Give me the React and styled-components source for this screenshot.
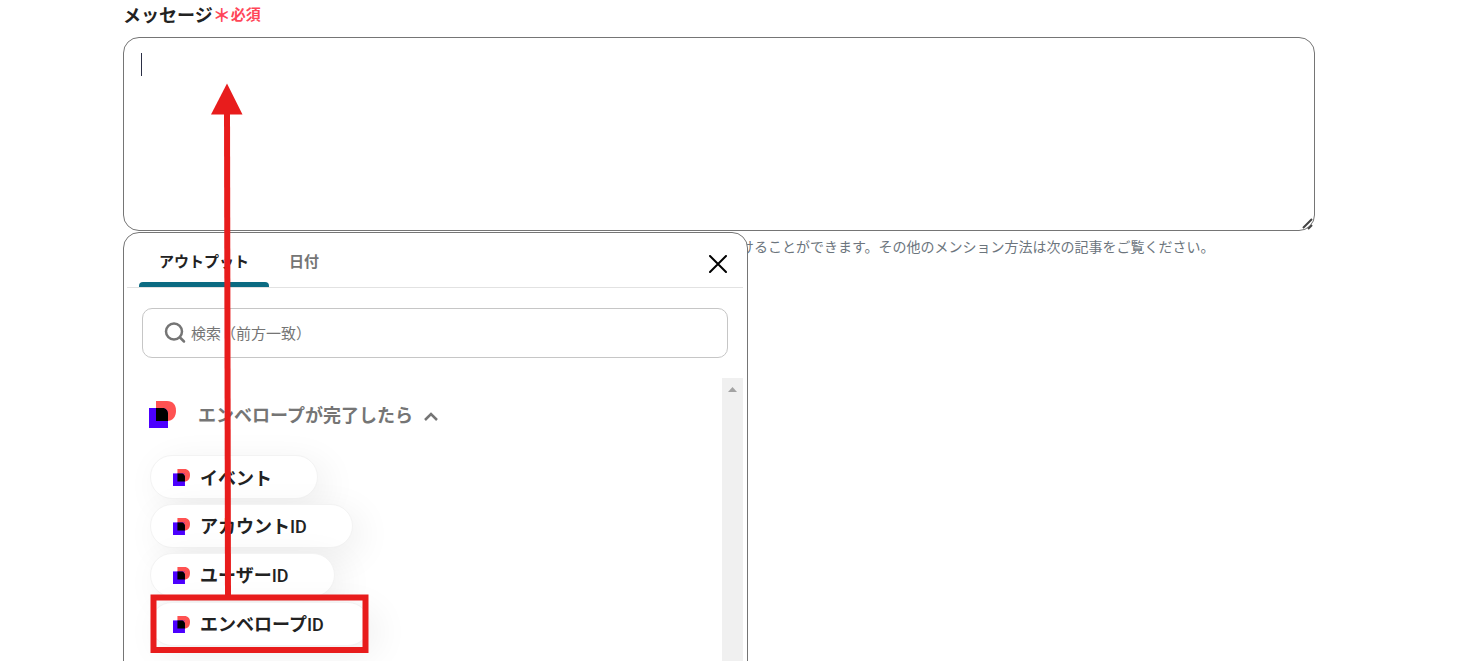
import React from "react";
import styled, { createGlobalStyle } from "styled-components";

const GlobalStyle = createGlobalStyle`
  * {
    box-sizing: border-box;
  }

  body {
    margin: 0;
    background: #fff;
    color: #222;
    font-family: "Noto Sans CJK JP", "Noto Sans", sans-serif;
    overflow: hidden;
  }

  button, input, textarea {
    font-family: inherit;
  }
`;

const Page = styled.main`
  height: 100vh;
  padding: 0 150px 0 123px;
  overflow: hidden;
`;

const Field = styled.div`
  position: relative;
`;

const LabelRow = styled.div`
  display: flex;
  align-items: center;
  height: 28px;
  margin-bottom: 9px;
`;

const Label = styled.label`
  font-size: 18px;
  font-weight: 700;
  line-height: 28px;
`;

const Required = styled.span`
  display: flex;
  color: #ff4658;
  font-size: 15px;
  font-weight: 700;
  line-height: 30px;
`;

const Star = styled.span`
  font-size: 18px;
`;

const Message = styled.textarea`
  display: block;
  width: 100%;
  height: 194px;
  padding: 14px 18px;
  border: 1px solid #757575;
  border-radius: 16px;
  background: #fff;
  font-size: 16px;
  outline: none;
  resize: none;
`;

// Text cursor at the start of the empty message
const Caret = styled.span`
  position: absolute;
  top: 53px;
  left: 18px;
  width: 1px;
  height: 23px;
  background: #2b2f45;
`;

const ResizeGrip = styled.svg`
  position: absolute;
  top: 218px;
  right: 1px;
  pointer-events: none;
`;

const Hint = styled.p`
  margin: 5px 0 0;
  padding-left: 617px;
  color: #6c757d;
  font-size: 14px;
  line-height: 20px;
  white-space: nowrap;
`;

const Picker = styled.section`
  position: absolute;
  top: 232px;
  left: 0;
  width: 625px;
  padding: 0 4px 0 3px;
  border: 1px solid #757575;
  border-radius: 16px;
  background: #fff;
`;

const PickerHeader = styled.div`
  display: flex;
  justify-content: space-between;
  height: 55px;
  padding: 0 11px 0 12px;
  border-bottom: 1px solid #e2e2e2;
`;

const Tabs = styled.div`
  display: flex;
`;

const Tab = styled.button`
  display: flex;
  flex-direction: column;
  justify-content: space-between;
  height: 54px;
  padding: 18px 0 0;
  border: 0;
  background: none;
  color: ${props => props.$active ? "#222" : "#757575"};
  font-size: 15px;
  font-weight: 700;
  line-height: 20px;

  span {
    padding: 0 20px;
  }

  &::after {
    content: "";
    align-self: stretch;
    height: 5px;
    border-radius: 4px 4px 0 0;
    background: ${props => props.$active ? "#0b6b82" : "none"};
  }
`;

const CloseButton = styled.button`
  display: flex;
  align-items: center;
  justify-content: center;
  align-self: center;
  width: 28px;
  height: 28px;
  margin-top: 7px;
  padding: 0;
  border: 0;
  background: none;
`;

const SearchBox = styled.label`
  display: flex;
  align-items: center;
  gap: 4px;
  height: 50px;
  margin: 20px 15px;
  padding: 0 20px;
  border: 1px solid #c6c6c6;
  border-radius: 10px;
`;

const SearchInput = styled.input`
  flex: 1;
  height: 24px;
  padding: 0 0 2px;
  border: 0;
  background: none;
  font-size: 15px;
  outline: none;

  &::placeholder {
    color: #757575;
    opacity: 1;
  }
`;

const ListArea = styled.div`
  display: flex;
  height: 360px;
  overflow: hidden;
`;

const List = styled.div`
  flex: 1;
  padding: 13px 22px 0;
  overflow: hidden;
`;

const ScrollTrack = styled.div`
  display: flex;
  justify-content: center;
  width: 21px;
  padding-top: 9px;
  background: #f0f0f0;
`;

const GroupButton = styled.button`
  display: flex;
  align-items: center;
  gap: 11px;
  height: 46px;
  padding: 0;
  border: 0;
  background: none;
  color: #757575;
  font-size: 18px;
  font-weight: 700;
  line-height: 26px;

  > svg {
    margin-top: 5px;
  }
`;

const GroupTitle = styled.span`
  display: flex;
  align-items: center;
  gap: 22px;
`;

const Chips = styled.div`
  display: flex;
  flex-direction: column;
  align-items: flex-start;
  gap: 5px;
  padding: 18px 0 0 1px;
`;

const Chip = styled.button`
  display: flex;
  align-items: center;
  gap: 10px;
  height: 44px;
  padding: 0 45px 0 22px;
  border: 1px solid #f3f3f3;
  border-radius: 22px;
  background: #fff;
  box-shadow: 8px 8px 36px rgba(0, 0, 0, 0.07);
  color: #222;
  font-size: 18px;
  font-weight: 700;
  line-height: 26px;
`;

const Latin = styled.span`
  font-family: Roboto, sans-serif;
  font-weight: 500;
`;

// Red guide drawn over the form, from the chip up to the message box
const Guide = styled.svg`
  position: absolute;
  top: 83px;
  left: 27px;
  pointer-events: none;
`;

function Logo({ size }) {
  return (
    <svg width={size} height={size} viewBox="0 0 27 27" aria-hidden="true">
      <path d="M7 0h11c6 0 9 4 9 9.500C27 15.500 24 20 18 20H7z" fill="#ff5252" />
      <path d="M0 7h19v20H0z" fill="#4c00ff" />
      <path d="M7 7h8c2.500 1 4 2.500 4 5v8H7z" fill="#000" />
      <path d="M15 7h4v5c0-2.500-1.500-4-4-5z" fill="#ff5252" />
    </svg>
  );
}

const chips = [
  { name: "イベント" },
  { name: "アカウント", suffix: "ID" },
  { name: "ユーザー", suffix: "ID" },
  { name: "エンベロープ", suffix: "ID" },
];

export default function App() {
  return (
    <Page>
      <GlobalStyle />
      <Field>
        <LabelRow>
          <Label htmlFor="message">メッセージ</Label>
          <Required>
            <Star>＊</Star>
            <span>必須</span>
          </Required>
        </LabelRow>
        <Message id="message" />
        <Caret />
        <ResizeGrip width="12" height="12" viewBox="0 0 12 12" stroke="#444" strokeWidth="2" aria-hidden="true">
          <path d="M1 10l9-9M6 11l4-4" />
        </ResizeGrip>
        <Hint>けることができます。その他のメンション方法は次の記事をご覧ください。</Hint>

        <Picker>
          <PickerHeader>
            <Tabs role="tablist">
              <Tab role="tab" aria-selected="true" $active><span>アウトプット</span></Tab>
              <Tab role="tab" aria-selected="false"><span>日付</span></Tab>
            </Tabs>
            <CloseButton aria-label="閉じる">
              <svg width="18" height="18" viewBox="0 0 18 18" stroke="#000" strokeWidth="2" strokeLinecap="round">
                <path d="M1 1l16 16M17 1L1 17" />
              </svg>
            </CloseButton>
          </PickerHeader>

          <SearchBox>
            <svg width="24" height="24" viewBox="0 0 24 24" fill="none" stroke="#757575" strokeWidth="2.500" strokeLinecap="round">
              <circle cx="11" cy="10.500" r="8" />
              <path d="M17 16.500l4 4" />
            </svg>
            <SearchInput type="text" placeholder="検索（前方一致）" aria-label="検索" />
          </SearchBox>

          <ListArea>
            <List>
              <GroupButton aria-expanded="true">
                <GroupTitle>
                  <Logo size={27} />
                  エンベロープが完了したら
                </GroupTitle>
                <svg width="14" height="9" viewBox="0 0 14 9" fill="none" stroke="#757575" strokeWidth="2.500">
                  <path d="M1 8l6-6 6 6" />
                </svg>
              </GroupButton>
              <Chips>
                {chips.map(chip => (
                  <Chip key={chip.name}>
                    <Logo size={17} />
                    <span>
                      {chip.name}
                      {chip.suffix && <Latin>{chip.suffix}</Latin>}
                    </span>
                  </Chip>
                ))}
              </Chips>
            </List>
            <ScrollTrack>
              <svg width="9" height="5" viewBox="0 0 9 5">
                <path d="M0 5L4.500 0 9 5z" fill="#a3a3a3" />
              </svg>
            </ScrollTrack>
          </ListArea>
        </Picker>

        <Guide width="219" height="571" viewBox="0 0 219 571" aria-hidden="true">
          <path d="M77 0.500l15.500 31H61z" fill="#e81c1c" />
          <path d="M77 28L78 512" stroke="#e81c1c" strokeWidth="6" />
          <rect x="3.500" y="514.500" width="212" height="52.500" fill="none" stroke="#e81c1c" strokeWidth="6" />
        </Guide>
      </Field>
    </Page>
  );
}
